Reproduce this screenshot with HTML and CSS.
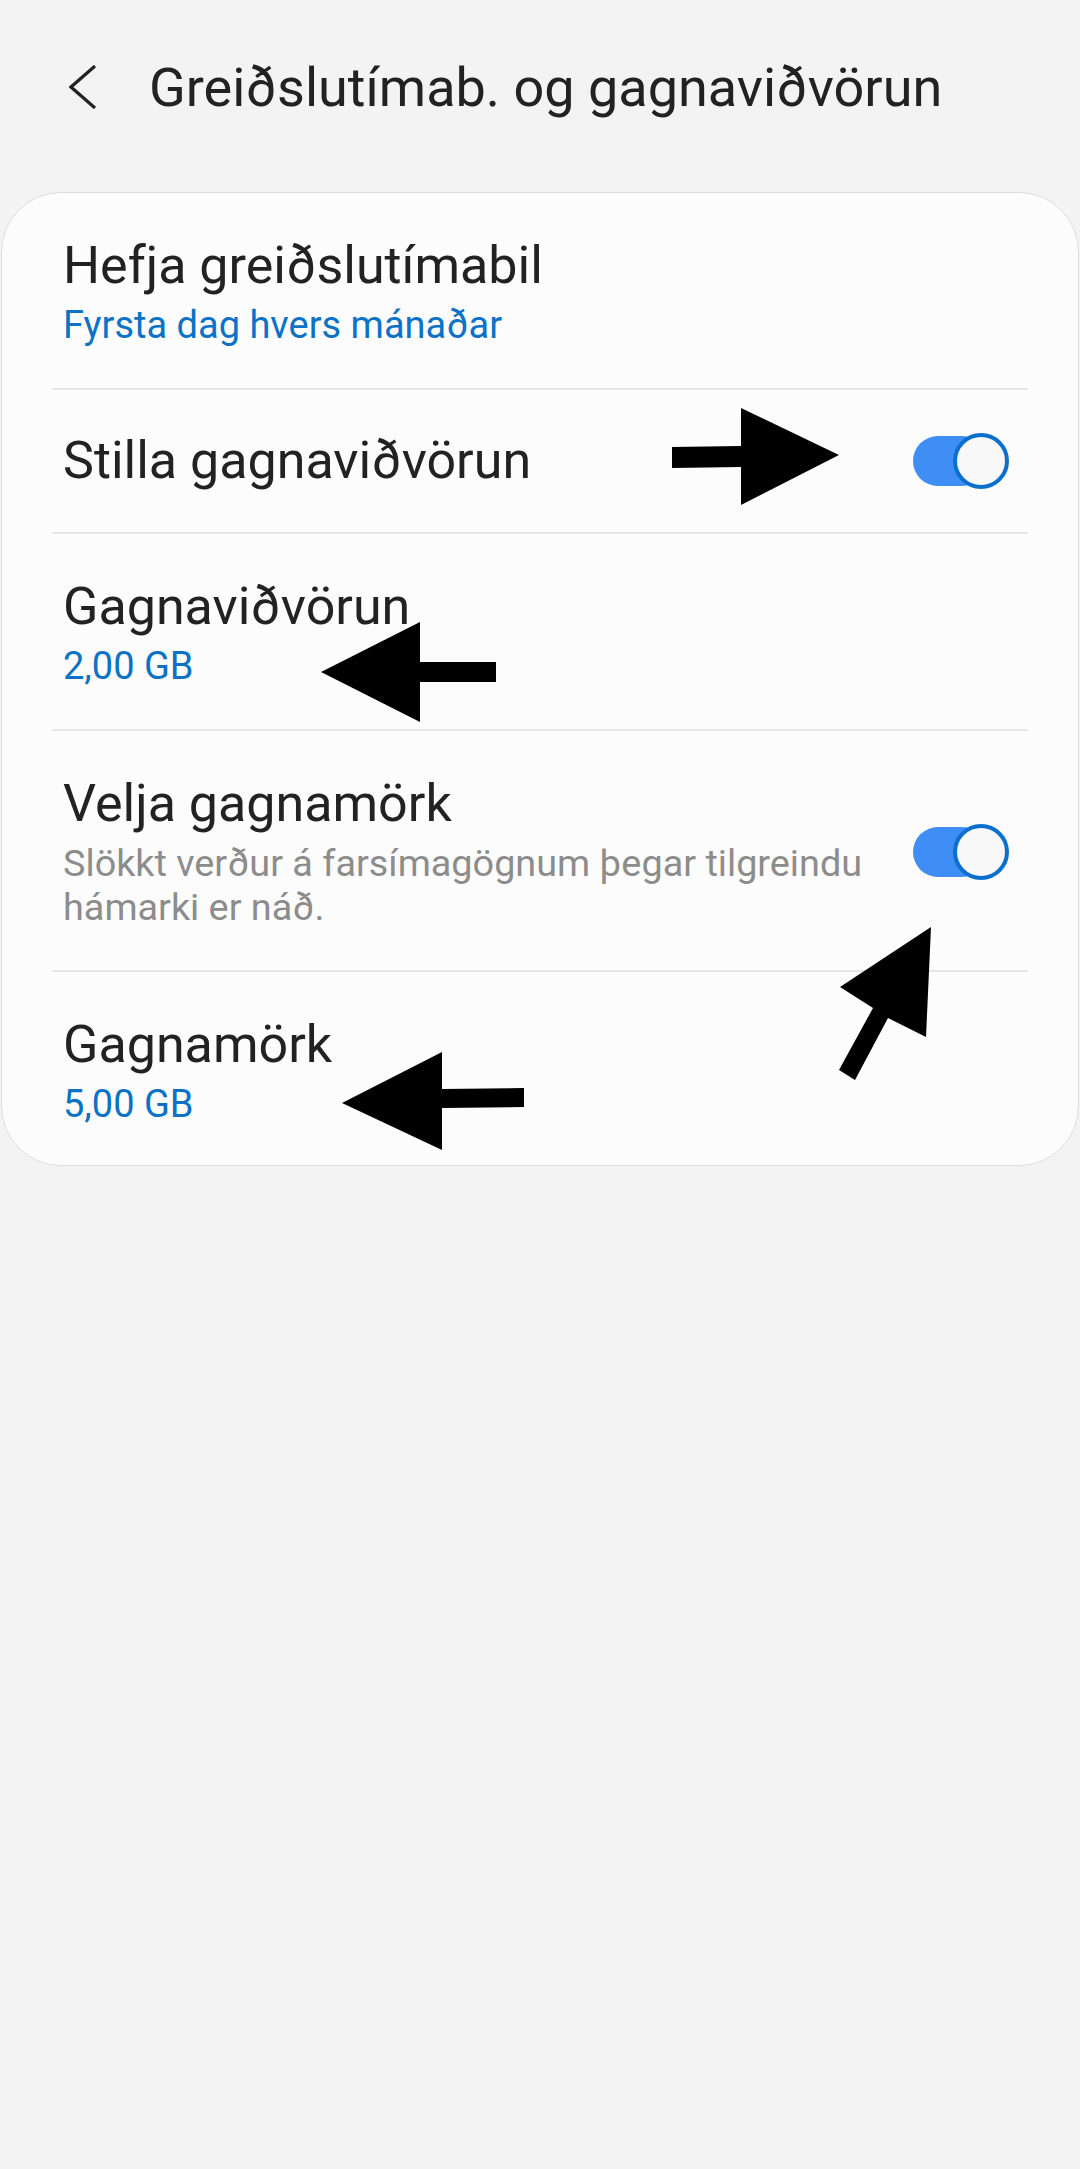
FILE: index.html
```html
<!DOCTYPE html>
<html lang="is">
<head>
    <meta charset="UTF-8">
    <meta name="viewport" content="width=device-width, initial-scale=1.0">
    <title>Greiðslutímab. og gagnaviðvörun</title>
    <link rel="stylesheet" href="styles.css">
</head>
<body>
    <div class="page">
        <div class="header">
            <svg class="back" width="28" height="44" viewBox="0 0 28 44">
                <polyline points="26,1 2,22 26,43" fill="none" stroke="#222" stroke-width="3.2"/>
            </svg>
            <h1>Greiðslutímab. og gagnaviðvörun</h1>
        </div>

        <div class="card">
            <div class="row">
                <div class="text">
                    <div class="title">Hefja greiðslutímabil</div>
                    <div class="value">Fyrsta dag hvers mánaðar</div>
                </div>
            </div>
            <div class="divider"></div>
            <div class="row single">
                <div class="text">
                    <div class="title">Stilla gagnaviðvörun</div>
                </div>
                <div class="switch"></div>
            </div>
            <div class="divider"></div>
            <div class="row">
                <div class="text">
                    <div class="title">Gagnaviðvörun</div>
                    <div class="value">2,00 GB</div>
                </div>
            </div>
            <div class="divider"></div>
            <div class="row">
                <div class="text">
                    <div class="title">Velja gagnamörk</div>
                    <div class="summary">Slökkt verður á farsímagögnum þegar tilgreindu hámarki er náð.</div>
                </div>
                <div class="switch"></div>
            </div>
            <div class="divider"></div>
            <div class="row last">
                <div class="text">
                    <div class="title">Gagnamörk</div>
                    <div class="value">5,00 GB</div>
                </div>
            </div>
        </div>

        <!-- örvar teiknaðar ofan á skjámyndina -->
        <svg class="arrows" width="1080" height="1200" viewBox="0 0 1080 1200">
            <polygon points="672,447 741,446 741,408 839,455 741,505 741,467 672,468"/>
            <polygon points="496,662 420,662 420,622 321,672 420,722 420,682 496,682"/>
            <polygon points="931,927 926,1037 888,1018 855,1080 839,1070 873,1008 840,987"/>
            <polygon points="524,1088 442,1089 442,1052 342,1103 442,1150 442,1108 524,1107"/>
        </svg>
    </div>
</body>
</html>
```

FILE: styles.css
```css
body {
    margin: 0;
    padding: 0;
    background-color: #f3f3f3;
    font-family: 'Roboto', 'Noto Sans', sans-serif;
    color: #222222;
}
.page {
    position: relative;
    min-height: 2169px;
}
.header {
    display: flex;
    align-items: center;
    padding: 56px 0 0 69px;
    height: 64px;
}
.back {
    margin-right: 52px;
    margin-top: -3px;
}
h1 {
    margin: 0;
    font-size: 54px;
    line-height: 64px;
    font-weight: 400;
    color: #222222;
}
.card {
    margin: 72px 1px 0 1px;
    background-color: #fcfcfc;
    border: 1px solid #dddddd;
    border-radius: 60px;
}
.row {
    display: flex;
    align-items: center;
    padding: 43px 69px 41px 61px;
}
.row.single {
    padding: 0 69px 0 61px;
    height: 142px;
}
.row.last {
    padding-bottom: 39px;
}
.text {
    flex: 1;
}
.title {
    font-size: 52px;
    line-height: 60px;
}
.value {
    margin-top: 7px;
    font-size: 38px;
    line-height: 44px;
    color: #0b72c6;
}
.summary {
    margin-top: 7px;
    font-size: 37.8px;
    line-height: 44px;
    color: #8c8c8c;
    padding-right: 20px;
}
.divider {
    height: 2px;
    margin: 0 50px;
    background-color: #e6e6e6;
}
.switch {
    position: relative;
    width: 96px;
    height: 56px;
    flex-shrink: 0;
}
.switch::before {
    content: "";
    position: absolute;
    left: 0;
    top: 3px;
    width: 74px;
    height: 50px;
    border-radius: 25px;
    background-color: #3e8ef6;
}
.switch::after {
    content: "";
    position: absolute;
    right: 0;
    top: 0;
    width: 48px;
    height: 48px;
    border-radius: 50%;
    border: 4px solid #0b6fcd;
    background-color: #f8f8f8;
}
.arrows {
    position: absolute;
    left: 0;
    top: 0;
    pointer-events: none;
}
.arrows polygon {
    fill: #000000;
}
```
